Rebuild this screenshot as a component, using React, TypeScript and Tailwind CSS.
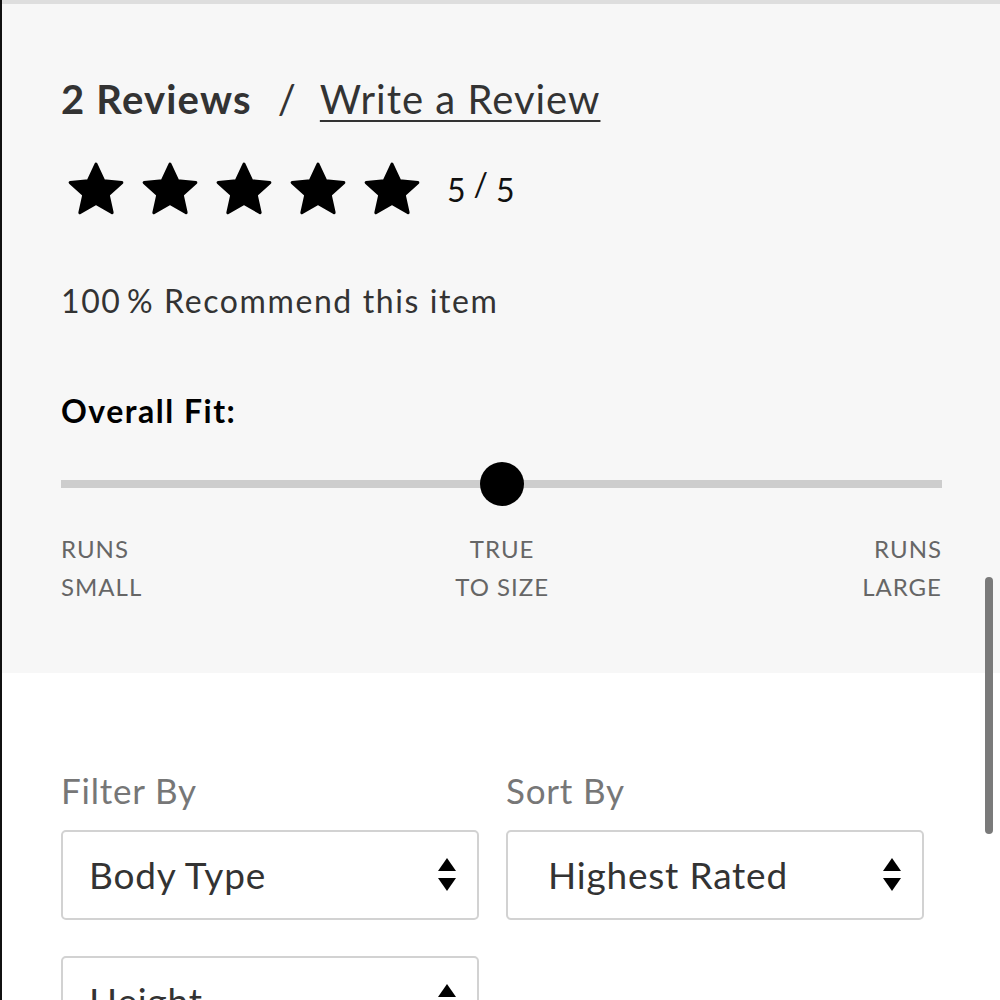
import React from "react";

const Star = () => (
  <svg width="62" height="58" viewBox="0 0 24 23" className="block">
    <path
      d="M12 1.2l3.05 6.6 7.2.75-5.4 4.85 1.55 7.1L12 16.85 5.6 20.5l1.55-7.1-5.4-4.85 7.2-.75z"
      fill="#000"
      stroke="#000"
      strokeWidth="1.2"
      strokeLinejoin="round"
    />
  </svg>
);

const Arrows = () => (
  <svg width="20" height="36" viewBox="0 0 20 36" className="block">
    <path d="M10 1 L19 14 L1 14 Z" fill="#000" />
    <path d="M1 21 L19 21 L10 34 Z" fill="#000" />
  </svg>
);

const Select = ({ label, pl }: { label: string; pl: string }) => (
  <div className={"h-[90px] w-[418px] rounded-[5px] border-2 border-[#d2d2d2] bg-white flex items-center justify-between pr-[20px] " + pl}>
    <span className="text-[37px] text-[#333] tracking-[0.8px]">{label}</span>
    <Arrows />
  </div>
);

export default function App() {
  return (
    <div
      className="relative w-[1000px] h-[1000px] overflow-hidden bg-white border-l-2 border-[#111]"
      style={{ fontFamily: "Lato, 'Open Sans', sans-serif" }}
    >
      <div className="h-[4px] bg-[#dedede]" />
      <div className="bg-[#f7f7f7] h-[669px] pl-[59px] pr-[58px] pt-[75px]">
        <div className="flex items-baseline text-[40px] leading-none text-[#333]">
          <span className="font-bold tracking-[1.2px]">2 Reviews</span>
          <span className="ml-[26px] mr-[24px]">/</span>
          <span className="underline decoration-2 underline-offset-[6px] tracking-[1px]">Write a Review</span>
        </div>
        <div className="flex items-center mt-[42px] ml-[4px]">
          <div className="flex gap-[12px]">
            <Star />
            <Star />
            <Star />
            <Star />
            <Star />
          </div>
          <span className="ml-[24px] text-[32px] text-[#111] leading-none">
            5<span className="mx-[8px] relative top-[-6px]">/</span>5
          </span>
        </div>
        <div className="mt-[66px] text-[32px] text-[#333] leading-none tracking-[1.6px]">100&#8201;% Recommend this item</div>
        <div className="mt-[78px] text-[32px] font-bold text-[#000] leading-none tracking-[1.5px]">Overall Fit:</div>
        <div className="relative mt-[35px] h-[44px] flex items-center">
          <div className="h-[8px] w-full bg-[#cdcdcd]" />
          <div className="absolute left-1/2 -translate-x-1/2 w-[44px] h-[44px] rounded-full bg-black" />
        </div>
        <div className="mt-[24px] flex justify-between text-[24px] text-[#666] leading-[38px] tracking-[1px]">
          <div>
            RUNS
            <br />
            SMALL
          </div>
          <div className="text-center">
            TRUE
            <br />
            TO SIZE
          </div>
          <div className="text-right">
            RUNS
            <br />
            LARGE
          </div>
        </div>
      </div>
      <div className="pl-[59px] pt-[100px]">
        <div className="flex gap-[27px]">
          <div>
            <div className="text-[35px] text-[#777] leading-none mb-[22px] tracking-[0.8px]">Filter By</div>
            <Select label="Body Type" pl="pl-[26px]" />
          </div>
          <div>
            <div className="text-[35px] text-[#777] leading-none mb-[22px] tracking-[0.8px]">Sort By</div>
            <Select label="Highest Rated" pl="pl-[40px]" />
          </div>
        </div>
        <div className="mt-[36px]">
          <Select label="Height" pl="pl-[26px]" />
        </div>
      </div>
      <div className="absolute left-[983px] top-[577px] w-[8px] h-[257px] rounded-full bg-[#7a7a7a]" />
    </div>
  );
}
